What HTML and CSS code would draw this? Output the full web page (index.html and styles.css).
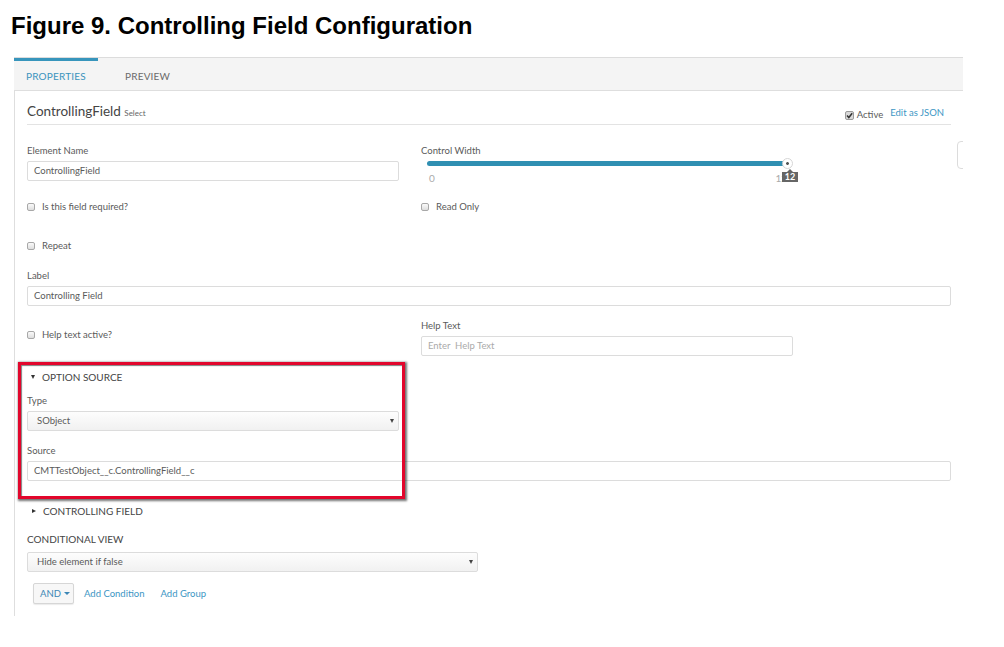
FILE: index.html
```html
<!DOCTYPE html>
<html>
<head>
<meta charset="utf-8">
<link rel="stylesheet" href="styles.css">
</head>
<body>
<h1 class="fig-title">Figure 9. Controlling Field Configuration</h1>
<div class="frame">
  <div class="tabs">
    <div class="tab active">PROPERTIES</div>
    <div class="tab">PREVIEW</div>
  </div>
  <div class="panel">
    <div class="panel-head">
      <div class="el-title">ControllingField <span class="el-type">Select</span></div>
      <div class="head-actions">
        <span class="active-check">
          <svg class="cb-svg" width="9" height="9" viewBox="0 0 9 9"><rect x="0.5" y="0.5" width="8" height="8" rx="1.5" fill="#d9d9d9" stroke="#9a9a9a"/><path d="M2 4.6 L3.8 6.5 L7.2 2.2" fill="none" stroke="#333" stroke-width="1.5"/></svg>
          Active
        </span>
        <span class="link">Edit as JSON</span>
      </div>
    </div>

    <div class="grid2 row-name">
      <div>
        <div class="lbl">Element Name</div>
        <div class="input half">ControllingField</div>
      </div>
      <div>
        <div class="lbl">Control Width</div>
        <div class="slider">
          <div class="track"></div>
          <div class="handle"></div>
          <div class="scale"><span>0</span><span>12</span></div>
          <div class="tip">12</div>
        </div>
      </div>
    </div>

    <div class="grid2 row-req">
      <div class="check"><span class="cb"></span>Is this field required?</div>
      <div class="check"><span class="cb"></span>Read Only</div>
    </div>

    <div class="check row-repeat"><span class="cb"></span>Repeat</div>

    <div class="lbl row-label">Label</div>
    <div class="input">Controlling Field</div>

    <div class="grid2 row-help">
      <div class="help-left"><div class="check"><span class="cb"></span>Help text active?</div></div>
      <div>
        <div class="lbl">Help Text</div>
        <div class="input half placeholder">Enter &nbsp;Help Text</div>
      </div>
    </div>

    <div class="sect row-opt"><span class="tri-down"></span>OPTION SOURCE</div>
    <div class="lbl row-type">Type</div>
    <div class="select half">SObject<span class="caret"></span></div>
    <div class="lbl row-source">Source</div>
    <div class="input">CMTTestObject__c.ControllingField__c</div>

    <div class="sect sect-closed row-ctrl"><span class="tri-right"></span>CONTROLLING FIELD</div>

    <div class="cv-title">CONDITIONAL VIEW</div>
    <div class="select wide">Hide element if false<span class="caret"></span></div>

    <div class="cond-row">
      <div class="and-btn">AND<span class="and-caret"></span></div>
      <span class="link">Add Condition</span>
      <span class="link link-group">Add Group</span>
    </div>

    <div class="highlight"></div>
    <div class="edge-box"></div>
  </div>
</div>
</body>
</html>
```

FILE: styles.css
```css
body {
  margin: 0;
  background: #fff;
  font-family: Lato, "Open Sans", sans-serif;
  color: #5a5a5a;
}

.fig-title {
  margin: 0;
  padding: 14px 0 0 11px;
  font: bold 24px/24px "Liberation Sans", Arial, sans-serif;
  color: #000;
}

.frame {
  margin: 19px 0 0 14px;
  width: 949px;
}

.tabs {
  display: flex;
  height: 32px;
  background: #f4f4f4;
  border-top: 1px solid #dcdcdc;
}

.tab {
  font-size: 10px;
  line-height: 12px;
  letter-spacing: 0.2px;
  padding: 12px 0 0 12px;
  color: #6a6a6a;
}

.tab.active {
  box-sizing: border-box;
  width: 84px;
  border-top: 3px solid #3795bc;
  padding-top: 9px;
  color: #3a93bd;
}

.tab + .tab {
  margin-left: 15px;
}

.panel {
  position: relative;
  overflow: hidden;
  border-left: 1px solid #dedede;
  border-top: 1px solid #dedede;
  padding: 0 12px 12px 12px;
}

.panel-head {
  display: flex;
  justify-content: space-between;
  align-items: flex-start;
  height: 21px;
  padding-top: 12px;
  border-bottom: 1px solid #e3e3e3;
}

.el-title {
  font-size: 13.5px;
  line-height: 16px;
  color: #444;
}

.el-type {
  font-size: 8px;
  color: #666;
}

.head-actions {
  display: flex;
  align-items: flex-start;
  margin-top: 4px;
  padding-right: 7px;
  font-size: 9.5px;
  line-height: 12px;
}

.active-check {
  display: flex;
  align-items: center;
  gap: 3px;
  padding-top: 2px;
  color: #5a5a5a;
  margin-right: 7px;
}

.cb-svg {
  display: block;
}

.link {
  color: #3c96c4;
  font-size: 9.5px;
  line-height: 12px;
}

.grid2 {
  display: grid;
  grid-template-columns: 394px 1fr;
}

.lbl {
  font-size: 9.5px;
  line-height: 12px;
  color: #5a5a5a;
}

.input,
.select {
  box-sizing: border-box;
  height: 20px;
  margin-top: 4px;
  border: 1px solid #dcdcdc;
  border-radius: 2px;
  padding-left: 6px;
  font-size: 9.5px;
  line-height: 18px;
  color: #5a5a5a;
  background: #fff;
}

.half {
  width: 372px;
}

.placeholder {
  color: #aaa;
}

.select {
  position: relative;
  padding-left: 9px;
  background: linear-gradient(#fdfdfd, #f1f1f1);
}

.select.wide {
  width: 451px;
  margin-top: 7px;
}

.caret {
  position: absolute;
  right: 4px;
  top: 7px;
  border-left: 2.5px solid transparent;
  border-right: 2.5px solid transparent;
  border-top: 4px solid #444;
}

.row-name {
  margin-top: 20px;
}

.slider {
  position: relative;
  height: 20px;
  margin: 4px 0 0 6px;
  width: 370px;
}

.track {
  width: 358px;
  height: 5px;
  border-radius: 3px;
  background: #2f8fb2;
}

.handle {
  position: absolute;
  left: 355px;
  top: -3px;
  width: 9px;
  height: 9px;
  border: 1px solid #d6d6d6;
  border-radius: 50%;
  background: radial-gradient(circle, #555 0 1.2px, #fff 1.6px);
}

.scale {
  display: flex;
  justify-content: space-between;
  width: 358px;
  margin-top: 6px;
  padding-left: 2px;
  font-size: 10px;
  line-height: 12px;
  color: #aaaaaa;
}

.tip {
  position: absolute;
  left: 355px;
  top: 11px;
  width: 16px;
  height: 10px;
  background: #666;
  color: #fff;
  font-size: 9px;
  font-weight: bold;
  line-height: 10px;
  text-align: center;
}

.tip::before {
  content: "";
  position: absolute;
  left: 5px;
  top: -3px;
  border-left: 3px solid transparent;
  border-right: 3px solid transparent;
  border-bottom: 3px solid #666;
}

.check {
  display: flex;
  align-items: center;
  gap: 7px;
  font-size: 9.5px;
  line-height: 12px;
  color: #5a5a5a;
}

.cb {
  box-sizing: border-box;
  width: 8px;
  height: 8px;
  border: 1px solid #a8a8a8;
  border-radius: 2px;
  background: linear-gradient(#fafafa, #dedede);
}

.row-req {
  margin-top: 20px;
}

.row-repeat {
  margin-top: 27px;
}

.row-label {
  margin-top: 18px;
}

.row-help {
  margin-top: 14px;
}

.help-left {
  padding-top: 9px;
}

.sect {
  display: flex;
  align-items: center;
  gap: 7px;
  padding-left: 4px;
  font-size: 10px;
  line-height: 12px;
  color: #444;
}

.tri-down {
  border-left: 2.5px solid transparent;
  border-right: 2.5px solid transparent;
  border-top: 4px solid #333;
}

.tri-right {
  border-top: 2.5px solid transparent;
  border-bottom: 2.5px solid transparent;
  border-left: 4px solid #333;
}

.sect-closed {
  padding-left: 5px;
  gap: 7px;
}

.row-opt {
  margin-top: 15px;
}

.row-type {
  margin-top: 12px;
}

.row-source {
  margin-top: 14px;
}

.row-ctrl {
  margin-top: 24px;
}

.cv-title {
  margin-top: 16px;
  font-size: 10px;
  line-height: 12px;
  color: #444;
}

.cond-row {
  display: flex;
  align-items: center;
  margin: 11px 0 0 6px;
}

.and-btn {
  box-sizing: border-box;
  display: flex;
  align-items: center;
  gap: 3px;
  height: 21px;
  width: 41px;
  padding-left: 6px;
  border: 1px solid #d6d6d6;
  border-radius: 2px;
  background: #f7f7f7;
  box-shadow: 0 1px 1px rgba(0, 0, 0, 0.08);
  font-size: 9.5px;
  color: #3c86b5;
}

.and-caret {
  border-left: 3px solid transparent;
  border-right: 3px solid transparent;
  border-top: 3px solid #3c86b5;
}

.cond-row .link {
  margin-left: 10px;
}

.cond-row .link-group {
  margin-left: 16px;
}

.highlight {
  position: absolute;
  left: 3px;
  top: 271px;
  box-sizing: border-box;
  width: 387px;
  height: 137px;
  border: 3px solid #e2062c;
  box-shadow: 1px 1px 2px 1px rgba(0, 0, 0, 0.55), inset 1px 1px 1px rgba(0, 0, 0, 0.5);
}

.edge-box {
  position: absolute;
  right: -10px;
  top: 50px;
  width: 14px;
  height: 26px;
  border: 1px solid #dcdcdc;
  border-radius: 4px;
}
```
